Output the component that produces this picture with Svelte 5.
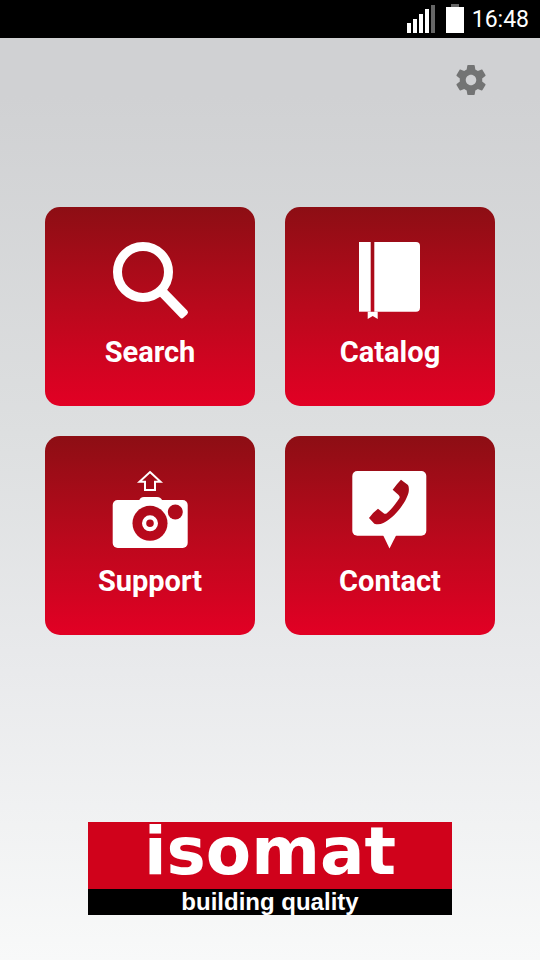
<script>
  const tiles = [
    { id: 'search', label: 'Search' },
    { id: 'catalog', label: 'Catalog' },
    { id: 'support', label: 'Support' },
    { id: 'contact', label: 'Contact' }
  ];
</script>

<div class="screen">
  <div class="status">
    <svg class="signal" width="28" height="28" viewBox="0 0 28 28" aria-hidden="true">
      <path fill="#fff" d="M0 18h4v10H0zM6 14h4v14H6zM12 9h4v19h-4zM18 4h4v24h-4z" />
      <path fill="#666" d="M24 0h4v28h-4z" />
    </svg>
    <svg class="battery" width="18" height="29" viewBox="0 0 18 29" aria-hidden="true">
      <path fill="#666" d="M5 0h8v3H5z" />
      <path fill="#fff" d="M0 3h18v26H0z" />
    </svg>
    <time>16:48</time>
  </div>

  <header>
    <button class="settings" aria-label="Settings">
      <svg width="36" height="36" viewBox="0 0 24 24" aria-hidden="true">
        <path fill="#737474" d="M19.43 12.98c.04-.32.07-.64.07-.98s-.03-.66-.07-.98l2.11-1.65c.19-.15.24-.42.12-.64l-2-3.46c-.12-.22-.39-.3-.61-.22l-2.49 1c-.52-.4-1.08-.73-1.69-.98l-.38-2.65C14.46 2.18 14.25 2 14 2h-4c-.25 0-.46.18-.49.42l-.38 2.65c-.61.25-1.17.59-1.69.98l-2.49-1c-.23-.09-.49 0-.61.22l-2 3.46c-.13.22-.07.49.12.64l2.11 1.65c-.04.32-.07.65-.07.98s.03.66.07.98l-2.11 1.65c-.19.15-.24.42-.12.64l2 3.46c.12.22.39.3.61.22l2.49-1c.52.4 1.08.73 1.69.98l.38 2.65c.03.24.24.42.49.42h4c.25 0 .46-.18.49-.42l.38-2.65c.61-.25 1.17-.59 1.69-.98l2.49 1c.23.09.49 0 .61-.22l2-3.46c.12-.22.07-.49-.12-.64l-2.11-1.65zM12 15.5c-1.930 0-3.500-1.570-3.500-3.500s1.570-3.500 3.500-3.500 3.500 1.570 3.500 3.500-1.570 3.500-3.500 3.500z" />
      </svg>
    </button>
  </header>

  <main>
    {#each tiles as tile (tile.id)}
      <button class="tile">
        <svg width="80" height="80" viewBox="0 0 80 80" fill="#fff" aria-hidden="true">
          {#if tile.id === 'search'}
            <circle cx="33" cy="32" r="25.5" fill="none" stroke="#fff" stroke-width="9" />
            <rect x="22" y="-5" width="39" height="10" rx="2.5" transform="translate(33 32) rotate(46)" />
          {:else if tile.id === 'catalog'}
            <path d="M9 2h11.700v69.700H9z" />
            <path d="M24.300 2H66a4 4 0 0 1 4 4v61.700a4 4 0 0 1-4 4H24.300z" />
            <path d="M17.700 71.700h10V79l-5-3-5 3z" />
          {:else if tile.id === 'support'}
            <path d="M40 3 50.500 12.700H45V21H35V12.700H29.500Z" fill="none" stroke="#fff" stroke-width="2" />
            <mask id="camera-cut">
              <rect width="80" height="80" fill="#fff" />
              <circle cx="40" cy="54.300" r="17.500" fill="#000" />
              <circle cx="65.300" cy="43" r="7.500" fill="#000" />
            </mask>
            <g mask="url(#camera-cut)">
              <rect x="2.700" y="31" width="75" height="48" rx="5" />
              <path d="M29 32q1-4 5-4h13q4 0 5.500 4z" />
            </g>
            <circle cx="40" cy="54.300" r="5.900" fill="none" stroke="#fff" stroke-width="4.200" />
          {:else}
            <mask id="phone-cut">
              <rect width="80" height="80" fill="#fff" />
              <path
                transform="translate(-70 -39) scale(.33333)"
                fill="#000"
                d="M363 149 384 165Q388 172 386 186C380 215 345 262 310 279Q296 286 283 281L267 264Q280 246 294 236L311 250Q316 254 322 248C335 238 348 220 358 205Q361 199 355 194L338 179Q350 162 363 149Z"
              />
            </mask>
            <g mask="url(#phone-cut)">
              <rect x="2.300" y="2" width="74" height="64.700" rx="5" />
              <path d="M33 66h13.300l-6.800 13.500z" />
            </g>
          {/if}
        </svg>
        <span>{tile.label}</span>
      </button>
    {/each}
  </main>

  <footer>
    <div class="logo">
      <div class="brand">isomat</div>
      <div class="tagline">building quality</div>
    </div>
  </footer>
</div>

<style>
  :global(body) {
    margin: 0;
  }
  .screen {
    min-height: 100vh;
    box-sizing: border-box;
    display: flex;
    flex-direction: column;
    background: linear-gradient(#d0d1d3 10%, #dddfe0 45%, #e9eaec 70%, #f8f9f9);
    font-family: Roboto, sans-serif;
  }
  .status {
    height: 38px;
    box-sizing: border-box;
    padding: 0 11px 5px 0;
    background: #000;
    color: #fff;
    display: flex;
    justify-content: flex-end;
    align-items: flex-end;
  }
  .battery {
    margin: 0 8px 0 11px;
  }
  time {
    font-size: 23px;
    line-height: 27px;
  }
  button {
    border: 0;
    padding: 0;
    background: none;
    font: inherit;
    cursor: pointer;
  }
  svg {
    display: block;
  }
  header {
    display: flex;
    justify-content: flex-end;
    padding: 24px 51px 0;
  }
  main {
    display: grid;
    grid-template-columns: 1fr 1fr;
    gap: 30px;
    padding: 109px 45px 40px;
  }
  .tile {
    height: 199px;
    border-radius: 15px;
    background: linear-gradient(#8d0e14, #b9091c 50%, #e20024);
    color: #fff;
    display: flex;
    flex-direction: column;
    align-items: center;
    justify-content: flex-start;
    padding-top: 33px;
    gap: 15px;
    font-size: 29px;
    font-weight: 700;
    line-height: 34px;
  }
  footer {
    margin-top: auto;
    padding: 0 88px 45px;
  }
  .logo {
    color: #fff;
    text-align: center;
    white-space: nowrap;
  }
  .brand {
    height: 67px;
    background: #d0021b;
    font: 700 66px/60px "DejaVu Sans", sans-serif;
  }
  .tagline {
    height: 26px;
    background: #000;
    font: 700 24px/25px "Liberation Sans", Arial, sans-serif;
  }
</style>
